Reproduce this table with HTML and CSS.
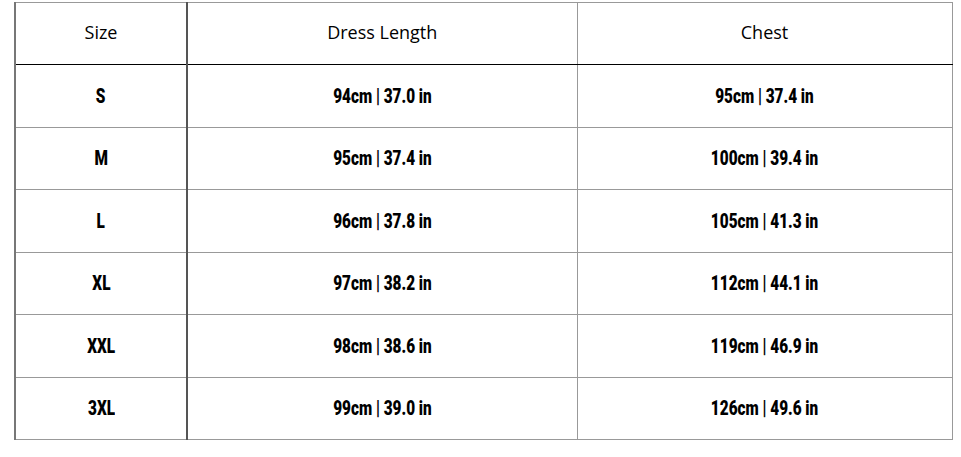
FILE: index.html
```html
<!DOCTYPE html>
<html>
<head>
<meta charset="utf-8">
<link rel="stylesheet" href="styles.css">
</head>
<body>
<table class="size-table">
  <colgroup>
    <col class="c1"><col class="c2"><col class="c3">
  </colgroup>
  <thead>
    <tr><th>Size</th><th>Dress Length</th><th>Chest</th></tr>
  </thead>
  <tbody>
    <tr><td><span class="v">S</span></td><td><span class="v">94cm | 37.0 in</span></td><td><span class="v">95cm | 37.4 in</span></td></tr>
    <tr><td><span class="v">M</span></td><td><span class="v">95cm | 37.4 in</span></td><td><span class="v">100cm | 39.4 in</span></td></tr>
    <tr><td><span class="v">L</span></td><td><span class="v">96cm | 37.8 in</span></td><td><span class="v">105cm | 41.3 in</span></td></tr>
    <tr><td><span class="v">XL</span></td><td><span class="v">97cm | 38.2 in</span></td><td><span class="v">112cm | 44.1 in</span></td></tr>
    <tr><td><span class="v">XXL</span></td><td><span class="v">98cm | 38.6 in</span></td><td><span class="v">119cm | 46.9 in</span></td></tr>
    <tr><td><span class="v">3XL</span></td><td><span class="v">99cm | 39.0 in</span></td><td><span class="v">126cm | 49.6 in</span></td></tr>
  </tbody>
</table>
</body>
</html>
```
FILE: styles.css
```css
html, body {
  margin: 0;
  padding: 0;
  background: #fff;
}
body {
  padding: 2px 0 0 14px;
}
.size-table {
  border-collapse: collapse;
  table-layout: fixed;
  width: 937px;
}
.c1 { width: 172px; }
.c2 { width: 390px; }
.c3 { width: 375px; }
.size-table th,
.size-table td {
  border: 1px solid #999;
  text-align: center;
  padding: 0;
  color: #000;
}
.size-table th {
  height: 62px;
  box-sizing: border-box;
  padding-bottom: 3px;
  font-family: "Open Sans", "Noto Sans", sans-serif;
  font-weight: normal;
  font-size: 18px;
  border-bottom: 1px solid #000;
}
.size-table td {
  font-family: Roboto, "DejaVu Sans", sans-serif;
  font-weight: 900;
  font-size: 21px;
  line-height: 1;
}
.size-table tbody tr:nth-child(odd) td { height: 62px; }
.size-table tbody tr:nth-child(even) td { height: 61px; }
.size-table th:first-child,
.size-table td:first-child {
  border-left: 2px solid #777;
  border-right: 2px solid #555;
}
.v {
  display: inline-block;
  transform: scaleX(0.73);
}
```
